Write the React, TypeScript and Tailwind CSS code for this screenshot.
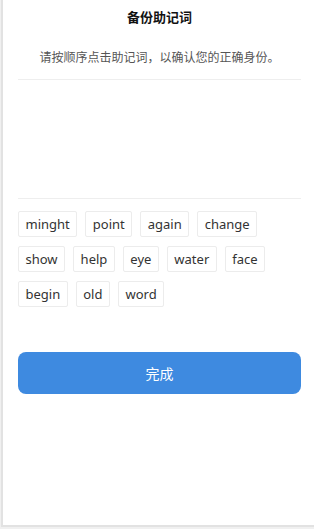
const words = [
  "minght",
  "point",
  "again",
  "change",
  "show",
  "help",
  "eye",
  "water",
  "face",
  "begin",
  "old",
  "word",
];

export default function App() {
  return (
    <div
      className="h-[529px] w-[314px] bg-[#f0f0f0] overflow-hidden"
      style={{ fontFamily: '"Noto Sans", "Noto Sans CJK SC", sans-serif' }}
    >
      <div className="ml-px h-[527px] border-l-2 border-b-2 border-[#e2e2e2] bg-white">
        <div className="pl-[15px] pr-[13px]">
          <h1 className="pt-[7px] text-center text-[13px] font-bold leading-[20px] text-[#111]">
            备份助记词
          </h1>
          <p className="mt-[21px] text-center text-[12px] leading-[20px] text-[#555]">
            请按顺序点击助记词，以确认您的正确身份。
          </p>
          <div className="mt-[11px] h-[120px] border-t border-b border-[#eeeeee]" />
          <div className="mt-[12px] flex flex-wrap gap-x-[8px] gap-y-[9px]">
            {words.map((w) => (
              <span
                key={w}
                className="h-[26px] rounded-[2px] border border-[#ececec] px-[6.5px] text-[13px] leading-[24px] text-[#333]"
              >
                {w}
              </span>
            ))}
          </div>
          <button className="mt-[45px] h-[42px] w-full rounded-[8px] bg-[#3e8ae0] text-[14px] text-white">
            完成
          </button>
        </div>
      </div>
    </div>
  );
}
